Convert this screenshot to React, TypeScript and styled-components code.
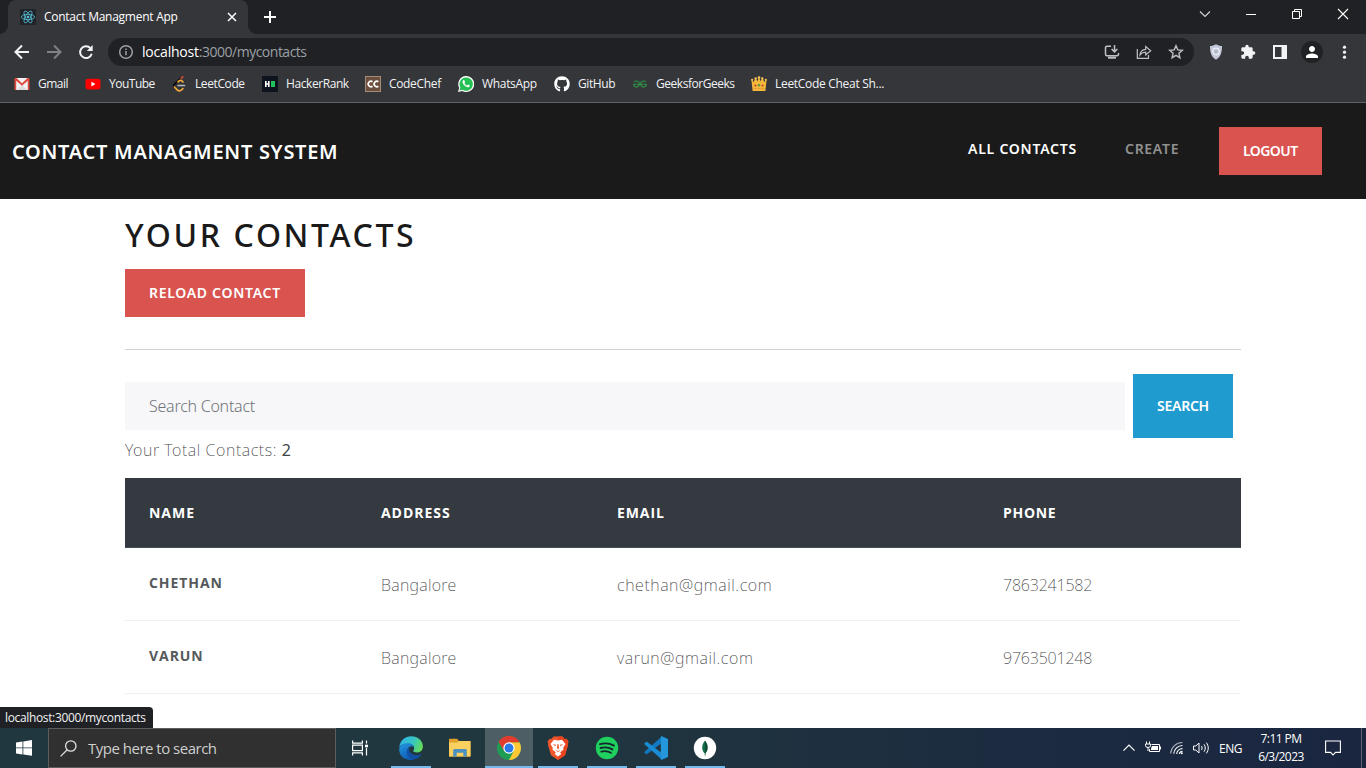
import React from 'react';
import styled, { createGlobalStyle } from 'styled-components';
import { FaGithub } from 'react-icons/fa';
import { SiGeeksforgeeks } from 'react-icons/si';
import { MdExtension, MdPerson } from 'react-icons/md';

const GlobalStyle = createGlobalStyle`
  * { box-sizing: border-box; }
  html, body { margin: 0; padding: 0; background: #fff; overflow: hidden; }
  body { font-family: "Open Sans", "Noto Sans", sans-serif; }
  svg { display: block; flex: none; }
  button, input { font-family: inherit; border: 0; border-radius: 0; padding: 0; }
`;

const Screen = styled.div`
  display: flex;
  flex-direction: column;
  width: 1366px;
  height: 768px;
  background: #fff;
  overflow: hidden;
`;

/* ---------- Browser chrome ---------- */

const TabStrip = styled.div`
  display: flex;
  height: 34px;
  flex: none;
  background: #202124;
  padding-left: 8px;
`;

const Tab = styled.div`
  position: relative;
  display: flex;
  align-items: center;
  width: 240px;
  height: 34px;
  padding: 0 10px 0 12px;
  border-radius: 8px 8px 0 0;
  background: #35363a;
  &::before,
  &::after {
    content: '';
    position: absolute;
    bottom: 0;
    width: 8px;
    height: 8px;
  }
  &::before { left: -8px; background: radial-gradient(circle at 0 0, #202124 7.5px, #35363a 8px); }
  &::after { right: -8px; background: radial-gradient(circle at 100% 0, #202124 7.5px, #35363a 8px); }
`;

const TabTitle = styled.span`
  flex: 1;
  margin-left: 8px;
  font-size: 12px;
  line-height: 16px;
  letter-spacing: -0.26px;
  color: #fff;
`;

const NewTab = styled.div`
  display: flex;
  align-items: center;
  margin-left: 15px;
`;

const WindowControls = styled.div`
  display: flex;
  align-items: center;
  margin-left: auto;
  height: 28px;
  & > svg { width: 46px; height: 16px; }
`;

const Toolbar = styled.div`
  display: flex;
  align-items: center;
  flex: none;
  height: 36px;
  padding-left: 14px;
  background: #35363a;
`;

const NavIcons = styled.div`
  display: flex;
  gap: 16px;
`;

const AddressBar = styled.div`
  display: flex;
  align-items: center;
  width: 1086px;
  height: 28px;
  margin-left: 14px;
  padding: 0 10px;
  border-radius: 14px;
  background: #202124;
`;

const Url = styled.span`
  flex: 1;
  margin-left: 8px;
  font-size: 14px;
  line-height: 20px;
  letter-spacing: -0.5px;
  color: #9aa0a6;
  b { font-weight: 400; letter-spacing: -0.2px; color: #fff; }
`;

const AddressActions = styled.div`
  display: flex;
  gap: 16px;
`;

const Extensions = styled.div`
  display: flex;
  align-items: center;
  gap: 16px;
  margin-left: 14px;
`;

const Avatar = styled.div`
  display: flex;
  align-items: center;
  justify-content: center;
  width: 22px;
  height: 22px;
  margin: 0 -3px;
  border-radius: 50%;
  background: #202124;
`;

const BookmarkBar = styled.div`
  display: flex;
  flex: none;
  height: 33px;
  padding: 6px 0 0 14px;
  background: #35363a;
  border-bottom: 1px solid #5f6063;
`;

const Bookmark = styled.div<{ $width: number; $spacing: number }>`
  display: flex;
  align-items: center;
  gap: 8px;
  flex: none;
  width: ${(p) => p.$width}px;
  height: 16px;
  font-size: 12px;
  line-height: 16px;
  letter-spacing: ${(p) => p.$spacing}px;
  white-space: nowrap;
  color: #f1f3f4;
`;

const BookmarkIcon = styled.span`
  display: flex;
  align-items: center;
  justify-content: center;
  width: 16px;
  height: 16px;
`;

/* ---------- Web page ---------- */

const Navbar = styled.header`
  display: flex;
  align-items: flex-start;
  flex: none;
  height: 96px;
  padding: 24px 44px 0 12px;
  background: #1a1a1a;
`;

const Brand = styled.div`
  flex: 1;
  font-family: "Noto Sans", sans-serif;
  font-size: 20px;
  font-weight: 600;
  line-height: 30px;
  margin-top: 10px;
  letter-spacing: 0.72px;
  color: #fff;
`;

const NavItem = styled.a<{ $active?: boolean; $width: number; $spacing: number }>`
  width: ${(p) => p.$width}px;
  margin-top: 11px;
  font-family: "Noto Sans", sans-serif;
  font-size: 14px;
  font-weight: 600;
  line-height: 21px;
  letter-spacing: ${(p) => p.$spacing}px;
  white-space: nowrap;
  color: ${(p) => (p.$active ? '#fff' : '#919191')};
`;

const Button = styled.button<{ $tone: string; $width: number; $height: number; $spacing: number }>`
  flex: none;
  width: ${(p) => p.$width}px;
  height: ${(p) => p.$height}px;
  padding: 0 0 2px 24px;
  text-align: left;
  font-family: "Noto Sans", sans-serif;
  font-size: 14px;
  font-weight: 600;
  letter-spacing: ${(p) => p.$spacing}px;
  white-space: nowrap;
  color: #fff;
  background: ${(p) => p.$tone};
`;

const Content = styled.main`
  display: flex;
  flex-direction: column;
  align-items: stretch;
  flex: 1;
  min-height: 0;
  width: 1116px;
  margin: 0 auto;
  & > button { align-self: flex-start; }
`;

const Title = styled.h1`
  margin: 16px 0 15px;
  font-family: "Noto Sans", sans-serif;
  font-size: 32px;
  font-weight: 500;
  line-height: 39px;
  letter-spacing: 2.65px;
  color: #1a1a1a;
`;

const Divider = styled.hr`
  width: 100%;
  height: 1px;
  margin: 32px 0 24px;
  border: 0;
  background: #d1d1d1;
`;

const SearchRow = styled.form`
  display: flex;
  align-items: center;
  gap: 8px;
`;

const SearchInput = styled.input`
  width: 1000px;
  height: 48px;
  padding: 0 24px;
  background: #f7f7f9;
  font-family: "Noto Sans", sans-serif;
  font-size: 16px;
  font-weight: 300;
  letter-spacing: -0.25px;
  &::placeholder { color: #6f7377; opacity: 1; }
`;

const Total = styled.p`
  margin: 2px 0 17px;
  font-family: "Noto Sans", sans-serif;
  font-size: 16px;
  font-weight: 200;
  line-height: 21px;
  letter-spacing: 0.6px;
  color: #3f4346;
  b { font-weight: 400; }
`;

const Table = styled.div`
  display: grid;
  grid-template-columns: 232px 236px 386px 262px;
`;

const HeadCell = styled.div<{ $spacing: number }>`
  height: 70px;
  padding: 24px 0 0 24px;
  border-bottom: 1px solid #454d55;
  background: #343a40;
  font-size: 14px;
  font-weight: 700;
  line-height: 21px;
  letter-spacing: ${(p) => p.$spacing}px;
  color: #fff;
`;

const NameCell = styled.div`
  height: 73px;
  padding: 24px 0 0 24px;
  border-bottom: 1px solid #f0f0f0;
  font-size: 14px;
  font-weight: 700;
  line-height: 21px;
  letter-spacing: 0.94px;
  color: #55595c;
`;

const Cell = styled.div<{ $spacing: number }>`
  height: 73px;
  padding: 25px 0 0 24px;
  border-bottom: 1px solid #f0f0f0;
  font-family: "Noto Sans", sans-serif;
  font-size: 16px;
  font-weight: 200;
  line-height: 24px;
  letter-spacing: ${(p) => p.$spacing}px;
  color: #3f4346;
`;

const StatusBubble = styled.div`
  position: absolute;
  left: 0;
  top: 707px;
  width: 153px;
  height: 21px;
  padding-left: 5px;
  border-radius: 0 4px 0 0;
  background: #202124;
  font-size: 12px;
  line-height: 21px;
  letter-spacing: -0.35px;
  color: #f1f3f4;
`;

/* ---------- Taskbar ---------- */

const Taskbar = styled.footer`
  display: flex;
  flex: none;
  height: 40px;
  background: linear-gradient(90deg, #21373f 0%, #21373f 40%, #1c2b40 75%, #1a2640 100%);
`;

const StartButton = styled.div`
  display: flex;
  align-items: center;
  justify-content: center;
  width: 48px;
`;

const TaskSearch = styled.div`
  display: flex;
  align-items: center;
  gap: 11px;
  width: 288px;
  padding-left: 11px;
  border: 1px solid #5b5d5e;
  background: #303030;
  font-size: 15px;
  letter-spacing: -0.5px;
  color: #cfcfcf;
`;

const TaskViewButton = styled.div`
  display: flex;
  align-items: center;
  justify-content: center;
  width: 51px;
  padding-right: 3px;
`;

const TaskApp = styled.div<{ $running?: boolean; $active?: boolean }>`
  display: flex;
  align-items: center;
  justify-content: center;
  width: 48px;
  height: 40px;
  margin-right: 1px;
  background-color: ${(p) => (p.$active ? '#4d5e65' : 'transparent')};
  background-image: ${(p) => (p.$running ? 'linear-gradient(#76b9ed, #76b9ed)' : 'none')};
  background-repeat: no-repeat;
  background-position: bottom center;
  background-size: ${(p) => (p.$active ? '48px' : '40px')} 2px;
`;

const Tray = styled.div`
  display: flex;
  align-items: center;
  margin-left: auto;
  color: #fff;
  font-size: 12px;
`;

const TrayIcons = styled.div`
  display: flex;
  align-items: center;
  gap: 8px;
`;

const Language = styled.span`
  width: 39px;
  margin-left: 10px;
  letter-spacing: -0.5px;
`;

const Clock = styled.div`
  width: 46px;
  text-align: center;
  line-height: 18px;
  letter-spacing: -0.55px;
  white-space: nowrap;
`;

const Notification = styled.div`
  width: 37px;
  height: 40px;
  display: flex;
  align-items: center;
  margin-left: 21px;
  border-right: 1px solid #5d6779;
`;

const DesktopEdge = styled.div`
  width: 4px;
`;

/* ---------- Icons ---------- */

const ReactFavicon = () => (
  <svg width="16" height="16" viewBox="0 0 16 16">
    <rect width="16" height="16" rx="1" fill="#20232a" />
    <g fill="none" stroke="#58c4dc" strokeWidth=".75">
      <ellipse cx="8" cy="8" rx="6.6" ry="2.6" />
      <ellipse cx="8" cy="8" rx="6.6" ry="2.6" transform="rotate(60 8 8)" />
      <ellipse cx="8" cy="8" rx="6.6" ry="2.6" transform="rotate(120 8 8)" />
    </g>
    <circle cx="8" cy="8" r="1.3" fill="#58c4dc" />
  </svg>
);

const GmailIcon = () => (
  <svg width="16" height="16" viewBox="0 0 16 16">
    <rect x="1" y="2" width="14" height="12" rx="1" fill="#f2f2f2" />
    <path d="M3 14l5-5 5 5z" fill="#dcdcdc" />
    <path d="M.5 3.200C.5 2.500 1 2 1.700 2h.8L8 7.200 13.500 2h.8c.7 0 1.200.5 1.200 1.200V14h-1.700V4.800L8 9.800 2.200 4.800V14H.5z" fill="#dd4b3e" />
  </svg>
);

const YouTubeIcon = () => (
  <svg width="16" height="16" viewBox="0 0 16 16">
    <rect x=".5" y="2.800" width="15" height="10.600" rx="2.600" fill="#f00" />
    <path d="M6.400 5.800v4.600l4-2.300z" fill="#fff" />
  </svg>
);

const LeetCodeIcon = () => (
  <svg width="16" height="16" viewBox="0 0 16 16" fill="none" strokeLinecap="round">
    <path d="M10 1.800L3.300 8.300c-.9.900-.9 2 0 2.900" stroke="#0c0c0e" strokeWidth="1.800" />
    <path d="M7 5.800L8.200 4.800c1-.7 2.100-.5 3 .4l.8.8M3.400 11l2.800 2.900c1.200 1.200 2.700 1.300 4 .3l1.700-1.600" stroke="#f0a83a" strokeWidth="1.700" />
    <path d="M7.100 9.500h6.300" stroke="#b9babc" strokeWidth="1.700" />
    <path d="M10.500 2l1-1" stroke="#b5473c" strokeWidth="2.400" />
  </svg>
);

const HackerRankIcon = () => (
  <svg width="16" height="16" viewBox="0 0 16 16">
    <rect width="16" height="16" fill="#0e141e" />
    <path d="M3 5h1.600v2.200h1.400V5h1.600v6H6V8.800H4.600V11H3z" fill="#fff" />
    <rect x="9" y="5" width="4" height="6" fill="#1fc35c" />
  </svg>
);

const CodeChefIcon = () => (
  <svg width="16" height="16" viewBox="0 0 16 16">
    <rect x=".5" y=".5" width="15" height="15" fill="#6d4f3d" stroke="#a58c7a" />
    <path d="M7.500 5.800A2.700 2.700 0 1 0 7.500 10.200M13.400 5.800A2.700 2.700 0 1 0 13.400 10.200" fill="none" stroke="#fff" strokeWidth="1.700" />
  </svg>
);

const WhatsAppIcon = () => (
  <svg width="16" height="16" viewBox="0 0 16 16">
    <path d="M0 16l1.200-4.200A8 8 0 1 1 4.200 14.900z" fill="#fff" />
    <path d="M1.500 14.500l.9-3A6.700 6.700 0 1 1 4.500 13.700z" fill="#25c053" />
    <path d="M5.300 4.200c-1.400 1-1 2.900.8 4.900 1.800 1.900 3.900 2.800 5.200 1.600.6-.6.6-1.100.4-1.300l-1.600-.8c-.4 0-.7.900-1.100.9-1-.3-2.100-1.300-2.500-2.300 0-.4.700-.7.600-1.100l-.7-1.600c-.2-.4-.7-.5-1.100-.3z" fill="#fff" />
  </svg>
);

const CrownIcon = () => (
  <svg width="16" height="16" viewBox="0 0 16 16">
    <path d="M.4 3.500L2.700 6 4.500 2l2 3.200L8 1l1.500 4.200 2-3.200 1.800 4 2.300-2.500-1.200 11.500H1.600z" fill="#f5b63c" />
    <circle cx="1.200" cy="3.800" r="1.100" fill="#f8c653" /><circle cx="4.700" cy="2.400" r="1.200" fill="#f8c653" />
    <circle cx="8" cy="1.500" r="1.300" fill="#f8c653" /><circle cx="11.300" cy="2.400" r="1.200" fill="#f8c653" />
    <circle cx="14.800" cy="3.800" r="1.100" fill="#f8c653" />
    <circle cx="8" cy="9.300" r="1.300" fill="#5c9b44" /><circle cx="4.400" cy="9.600" r="1" fill="#c0392b" />
    <circle cx="11.600" cy="9.600" r="1" fill="#c0392b" />
    <path d="M2 12.500h12" stroke="#e09c2e" strokeWidth=".8" />
  </svg>
);

const BackIcon = () => (
  <svg width="16" height="16" viewBox="0 0 16 16" fill="none" stroke="#f1f3f4" strokeWidth="2"><path d="M15 8H2M8 1.500L1.500 8 8 14.500" /></svg>
);
const ForwardIcon = () => (
  <svg width="16" height="16" viewBox="0 0 16 16" fill="none" stroke="#7f8184" strokeWidth="2"><path d="M1 8h13M8 1.500L14.500 8 8 14.500" /></svg>
);
const ReloadIcon = () => (
  <svg width="16" height="16" viewBox="0 0 16 16"><path d="M13.700 9.800A5.900 5.900 0 1 1 12.400 4.200" fill="none" stroke="#f1f3f4" strokeWidth="2" /><path d="M14.700 1v6H8.800z" fill="#f1f3f4" /></svg>
);
const InfoIcon = () => (
  <svg width="16" height="16" viewBox="0 0 16 16" fill="none" stroke="#9aa0a6" strokeWidth="1.500"><circle cx="8" cy="8" r="6.300" /><path d="M8 7v4.300M8 4.400v1.600" /></svg>
);
const InstallIcon = () => (
  <svg width="16" height="16" viewBox="0 0 16 16" fill="none" stroke="#bdc1c6" strokeWidth="1.500"><path d="M7 2.200H3a1.500 1.500 0 0 0-1.500 1.500v6.600A1.500 1.500 0 0 0 3 11.800h10a1.500 1.500 0 0 0 1.500-1.500V9M10.500 1v6.500M7.600 5l2.900 2.900L13.400 5" /><path d="M4 13.700h8" strokeWidth="2" /></svg>
);
const ShareIcon = () => (
  <svg width="16" height="16" viewBox="0 0 16 16" fill="none" stroke="#bdc1c6" strokeWidth="1.200"><path d="M1.300 5v9.400h11.200V11" /><path d="M4 10.800c.4-3.300 2.400-5.200 5.700-5.400V2.500l5 4.300-5 4.200V8.200C7.200 8.200 5.400 9 4 10.800z" /></svg>
);
const StarIcon = () => (
  <svg width="16" height="16" viewBox="0 0 16 16" fill="none" stroke="#bdc1c6" strokeWidth="1.400"><path d="M8 1.800l1.800 4.100 4.500.4-3.400 3 1 4.400L8 11.400l-3.900 2.300 1-4.400-3.400-3 4.500-.4z" /></svg>
);
const ShieldIcon = () => (
  <svg width="16" height="16" viewBox="0 0 16 16"><path d="M8 .3c2 1.200 4 1.700 6 1.800 0 6-1 11-6 13.600C3 13.100 2 8.100 2 2.100 4 2 6 1.500 8 .3z" fill="#c3c9d8" /><circle cx="8" cy="7.500" r="3.300" fill="none" stroke="#eef0f6" strokeWidth="1.200" /><circle cx="8" cy="7.500" r="1.300" fill="#aab2c4" /></svg>
);
const SidePanelIcon = () => (
  <svg width="16" height="16" viewBox="0 0 16 16"><path fillRule="evenodd" d="M1 1h14v14H1zM3 3v10h6.500V3z" fill="#f1f3f4" /></svg>
);
const MenuIcon = () => (
  <svg width="16" height="16" viewBox="0 0 16 16" fill="#f1f3f4"><circle cx="8.500" cy="3.200" r="1.600" /><circle cx="8.500" cy="8.200" r="1.600" /><circle cx="8.500" cy="13.200" r="1.600" /></svg>
);

const WindowsIcon = () => (
  <svg width="16" height="16" viewBox="0 0 16 16" fill="#fff"><path d="M0 2.400l6.500-.9v6H0zM7.300 1.400L16 .1v7.400H7.300zM0 8.300h6.500v6.100L0 13.500zM7.300 8.300H16v7.500l-8.700-1.200z" /></svg>
);
const MagnifierIcon = () => (
  <svg width="17" height="17" viewBox="0 0 17 17" fill="none" stroke="#e0e0e0" strokeWidth="1.300"><circle cx="10.800" cy="6" r="5.200" /><path d="M7.200 9.800L.6 16.400" /></svg>
);
const TaskViewIcon = () => (
  <svg width="18" height="16" viewBox="0 0 18 16" fill="none" stroke="#fff" strokeWidth="1.200"><path d="M1.600.5v2.600h9.800V.5M1.600 15.500v-2.600h9.800v2.600M1.600 5.200h9.800v5.500H1.600zM15.500.5v3M15.500 8v7.500" /><path d="M14 4.700h3v2.600h-3z" fill="#fff" stroke="none" /></svg>
);
const EdgeIcon = () => (
  <svg width="24" height="24" viewBox="0 0 24 24">
    <defs>
      <linearGradient id="edgeTop" x1="0" y1=".3" x2="1" y2=".6"><stop offset="0" stopColor="#2fb2ea" /><stop offset=".55" stopColor="#37c5c0" /><stop offset="1" stopColor="#66dc55" /></linearGradient>
      <linearGradient id="edgeSide" x1="0" y1="0" x2=".5" y2="1"><stop offset="0" stopColor="#2598e0" /><stop offset="1" stopColor="#0e5cb4" /></linearGradient>
    </defs>
    <path d="M.3 11C1 4.600 6 .2 12.200.2 19 .2 23.900 5 23.900 10.500c0 3.700-2.700 6-6 6-2.300 0-3.900-.8-3.700-1.700.2-.5 1-.9 1-2.600 0-2.400-2.400-4.400-6-4.400C5 7.800 1.500 9 .3 11z" fill="url(#edgeTop)" />
    <path d="M.2 12.800C.5 9.600 4 7.200 8.500 7.200c3.600 0 6 1.600 6.700 4.200-1.200-1.300-3.200-1.500-4.900-.3-2.700 2-2.100 6.800.6 9.600 1.100 1.300 2.500 2.300 4.300 2.700C6.800 25.500-.3 20.500.2 12.800z" fill="url(#edgeSide)" />
    <path d="M10.300 11.100c-2.900 1.500-3.500 6.200-.9 9.600 1.200 1.500 3.200 2.800 5.800 2.700 3-.5 5.600-2.200 7-4.700.3-.5-.1-.8-.6-.5-3.500 1.900-8.400 1-10.500-1.900-1.100-1.600-1.400-3.600-.8-5.200z" fill="#1150a4" />
  </svg>
);
const FolderIcon = () => (
  <svg width="24" height="24" viewBox="0 0 24 24">
    <path d="M1 2.800h8l2 2.200h11.500V20.500H1z" fill="#e0a02c" />
    <path d="M1 6.500h8.500L11 5h11.500v15.500H1z" fill="#fbd05f" />
    <path d="M5.200 20.500v-6c0-1 .5-1.500 1.500-1.500h10.600c1 0 1.500.5 1.500 1.500v6h-3.500v-3.800H8.700v3.800z" fill="#4a93c0" />
  </svg>
);
const ChromeIcon = () => (
  <svg width="24" height="24" viewBox="0 0 24 24">
    <circle cx="12" cy="12" r="12" fill="#1f9d55" />
    <path d="M12 6.300h10.560A12 12 0 0 1 12 24l4.940-9.150z" fill="#fcc934" />
    <path d="M1.600 6A12 12 0 0 1 22.600 6.300H12L7.060 14.850z" fill="#e33b2e" />
    <circle cx="12" cy="12" r="5.700" fill="#fff" /><circle cx="12" cy="12" r="4.500" fill="#2b78ea" />
  </svg>
);
const BraveIcon = () => (
  <svg width="22" height="24" viewBox="0 0 22 24">
    <path d="M6.500.5h9L17.500 3l2-.3 2 3-.8 2L21 9l-3 10.300L11 24l-7-4.700L1 9l.3-1.300-.8-2 2-3 2 .3z" fill="#f1562b" />
    <path d="M11 .5h4.500L17.500 3l2-.3 2 3-.8 2L21 9l-3 10.300L11 24z" fill="#e94420" />
    <path d="M7 3.700l4 .7 4-.7L18.500 8l-2.300 3.800.3 2-3.400 2.400 1.200 1.700L11 20.600l-3.300-2.700 1.200-1.700-3.400-2.400.3-2L3.500 8z" fill="#fff" />
    <path d="M5.500 8.200l3.500.6-.4 1.500zM16.500 8.200l-3.500.6.400 1.500zM10.500 8h1l.5 4-1 1.500-1-1.500zM7.800 13.500l3.200 1.700 3.200-1.700-3.200 2.700z" fill="#f1562b" />
  </svg>
);
const SpotifyIcon = () => (
  <svg width="24" height="24" viewBox="0 0 24 24"><circle cx="12" cy="12" r="11.200" fill="#1fd05e" /><path d="M5 8.200c4.700-1.300 9.800-.9 14 1.400M5.600 12c4-1.100 8.300-.7 11.800 1.400M6.300 15.600c3.300-.8 6.700-.5 9.600 1.200" fill="none" stroke="#17252c" strokeWidth="1.900" strokeLinecap="round" /></svg>
);
const VsCodeIcon = () => (
  <svg width="24" height="24" viewBox="0 0 24 24">
    <path d="M17.500.8L.7 15.600c-.4.400-.4.900 0 1.300L2 18c.4.300.8.300 1.200 0L18.500 6.500z" fill="#1277bd" />
    <path d="M17.500 23.200L.7 8.400c-.4-.4-.4-.9 0-1.300L2 6c.4-.3.8-.3 1.200 0l15.300 11.500z" fill="#1b8bd4" />
    <path d="M17.800.2L24 3v18l-6.200 2.800c-.5.200-1-.1-1-.6V.8c0-.5.500-.8 1-.6z" fill="#2496dc" />
  </svg>
);
const MongoIcon = () => (
  <svg width="24" height="24" viewBox="0 0 24 24"><circle cx="12" cy="12" r="11.200" fill="#fff" /><path d="M12 4.600c-3.800 4.700-3.500 9.900-.3 13v1.800h.6z" fill="#11704a" /><path d="M12 4.600c3.800 4.700 3.500 9.900.3 13v1.800h-.3z" fill="#0a4c34" /></svg>
);
const TrayChevron = () => (
  <svg width="16" height="16" viewBox="0 0 16 16" fill="none" stroke="#fff" strokeWidth="1.200"><path d="M2.500 10.700L8 5.200l5.500 5.500" /></svg>
);
const BatteryIcon = () => (
  <svg width="16" height="16" viewBox="0 0 16 16" fill="none" stroke="#fff" strokeWidth="1"><path d="M6.500 4.500h8v7h-10V9" /><path d="M7 6h6v4H6V8.500z" fill="#fff" stroke="none" /><path d="M15.500 6.500v3M1.500 1.500V4M4.500 1.500V4M.5 4h5v1.500a2.500 2 0 0 1-5 0zM3 7.500V11" /></svg>
);
const WifiIcon = () => (
  <svg width="16" height="16" viewBox="0 0 16 16" fill="none" stroke="#fff" strokeWidth="1.100"><path d="M1.600 13.500A11.900 11.900 0 0 1 13.500 2.500" stroke="#aab0bb" /><path d="M4.700 13.800A9 9 0 0 1 13.500 5.500M7.600 13.900A6 6 0 0 1 13.500 8.600M10.300 14a3.300 3.300 0 0 1 3.200-2.600" /><circle cx="12.800" cy="13.300" r="1" fill="#fff" stroke="none" /></svg>
);
const SoundIcon = () => (
  <svg width="16" height="16" viewBox="0 0 16 16" fill="none" stroke="#fff" strokeWidth="1"><path d="M.5 6h2.300L6 3v10L2.800 10H.5zM8.500 6c.8 1.200.8 2.800 0 4M11 4.300c1.700 2.200 1.700 5.200 0 7.400M13.300 2.600c2.600 3.200 2.600 7.600 0 10.800" /></svg>
);
const NotificationIcon = () => (
  <svg width="16" height="16" viewBox="0 0 16 16" fill="none" stroke="#fff" strokeWidth="1.100"><path d="M.6 1h14.800v11.400H10.500L8 14.900l-2.500-2.500H.6z" /></svg>
);

/* ---------- Data ---------- */

const bookmarks = [
  { label: 'Gmail', icon: <GmailIcon />, width: 71, spacing: -0.5 },
  { label: 'YouTube', icon: <YouTubeIcon />, width: 86, spacing: -0.5 },
  { label: 'LeetCode', icon: <LeetCodeIcon />, width: 91, spacing: -0.4 },
  { label: 'HackerRank', icon: <HackerRankIcon />, width: 103, spacing: -0.42 },
  { label: 'CodeChef', icon: <CodeChefIcon />, width: 93, spacing: -0.34 },
  { label: 'WhatsApp', icon: <WhatsAppIcon />, width: 96, spacing: -0.32 },
  { label: 'GitHub', icon: <FaGithub size={16} color="#fff" />, width: 78, spacing: -0.4 },
  { label: 'GeeksforGeeks', icon: <SiGeeksforgeeks size={14} color="#2f8d46" />, width: 119, spacing: -0.46 },
  { label: 'LeetCode Cheat Sh...', icon: <CrownIcon />, width: 160, spacing: -0.3 },
];

const columns = [
  { label: 'NAME', spacing: 0.97 },
  { label: 'ADDRESS', spacing: 0.95 },
  { label: 'EMAIL', spacing: 0.9 },
  { label: 'PHONE', spacing: 0.7 },
];

const contacts = [
  { name: 'CHETHAN', address: 'Bangalore', email: 'chethan@gmail.com', phone: '7863241582' },
  { name: 'VARUN', address: 'Bangalore', email: 'varun@gmail.com', phone: '9763501248' },
];

export default function App() {
  return (
    <Screen>
      <GlobalStyle />
      <TabStrip>
        <Tab>
          <ReactFavicon />
          <TabTitle>Contact Managment App</TabTitle>
          <svg width="12" height="12" viewBox="0 0 12 12" stroke="#fff" strokeWidth="1.500"><path d="M2 2l8 8M10 2l-8 8" /></svg>
        </Tab>
        <NewTab>
          <svg width="14" height="14" viewBox="0 0 14 14" stroke="#fff" strokeWidth="2"><path d="M7 1v12M1 7h12" /></svg>
        </NewTab>
        <WindowControls>
          <svg viewBox="0 0 46 16" fill="none" stroke="#d5d6d8" strokeWidth="1.100"><path d="M18 5.500l5 5 5-5" /></svg>
          <svg viewBox="0 0 46 16" fill="none" stroke="#fff"><path d="M18 8.500h10" /></svg>
          <svg viewBox="0 0 46 16" fill="none" stroke="#fff"><path d="M18.500 5.500h7v7h-7zM20.500 5.500v-2h7v7h-2" /></svg>
          <svg viewBox="0 0 46 16" fill="none" stroke="#fff" strokeWidth="1.100"><path d="M18 3l10 10M28 3L18 13" /></svg>
        </WindowControls>
      </TabStrip>
      <Toolbar>
        <NavIcons><BackIcon /><ForwardIcon /><ReloadIcon /></NavIcons>
        <AddressBar>
          <InfoIcon />
          <Url><b>localhost</b>:3000/mycontacts</Url>
          <AddressActions><InstallIcon /><ShareIcon /><StarIcon /></AddressActions>
        </AddressBar>
        <Extensions>
          <ShieldIcon />
          <MdExtension size={16} color="#f1f3f4" />
          <SidePanelIcon />
          <Avatar><MdPerson size={18} color="#fff" /></Avatar>
          <MenuIcon />
        </Extensions>
      </Toolbar>
      <BookmarkBar>
        {bookmarks.map((b) => (
          <Bookmark key={b.label} $width={b.width} $spacing={b.spacing}>
            <BookmarkIcon>{b.icon}</BookmarkIcon>
            <span>{b.label}</span>
          </Bookmark>
        ))}
      </BookmarkBar>

      <Navbar>
        <Brand>CONTACT MANAGMENT SYSTEM</Brand>
        <NavItem $active $width={157} $spacing={0.76}>ALL CONTACTS</NavItem>
        <NavItem $width={94} $spacing={0.7}>CREATE</NavItem>
        <Button $tone="#d9534f" $width={103} $height={48} $spacing={-0.56}>LOGOUT</Button>
      </Navbar>
      <Content>
        <Title>YOUR CONTACTS</Title>
        <Button $tone="#d9534f" $width={180} $height={48} $spacing={0.7}>RELOAD CONTACT</Button>
        <Divider />
        <SearchRow>
          <SearchInput placeholder="Search Contact" />
          <Button type="button" $tone="#1f9bcf" $width={100} $height={64} $spacing={-0.25}>SEARCH</Button>
        </SearchRow>
        <Total>Your Total Contacts: <b>2</b></Total>
        <Table>
          {columns.map((c) => (
            <HeadCell key={c.label} $spacing={c.spacing}>{c.label}</HeadCell>
          ))}
          {contacts.map((c) => (
            <React.Fragment key={c.name}>
              <NameCell>{c.name}</NameCell>
              <Cell $spacing={0.32}>{c.address}</Cell>
              <Cell $spacing={0.6}>{c.email}</Cell>
              <Cell $spacing={-0.2}>{c.phone}</Cell>
            </React.Fragment>
          ))}
        </Table>
      </Content>
      <StatusBubble>localhost:3000/mycontacts</StatusBubble>

      <Taskbar>
        <StartButton><WindowsIcon /></StartButton>
        <TaskSearch><MagnifierIcon /><span>Type here to search</span></TaskSearch>
        <TaskViewButton><TaskViewIcon /></TaskViewButton>
        <TaskApp $running><EdgeIcon /></TaskApp>
        <TaskApp><FolderIcon /></TaskApp>
        <TaskApp $running $active><ChromeIcon /></TaskApp>
        <TaskApp $running><BraveIcon /></TaskApp>
        <TaskApp $running><SpotifyIcon /></TaskApp>
        <TaskApp $running><VsCodeIcon /></TaskApp>
        <TaskApp $running><MongoIcon /></TaskApp>
        <Tray>
          <TrayIcons><TrayChevron /><BatteryIcon /><WifiIcon /><SoundIcon /></TrayIcons>
          <Language>ENG</Language>
          <Clock><div>7:11 PM</div><div>6/3/2023</div></Clock>
          <Notification><NotificationIcon /></Notification>
          <DesktopEdge />
        </Tray>
      </Taskbar>
    </Screen>
  );
}
